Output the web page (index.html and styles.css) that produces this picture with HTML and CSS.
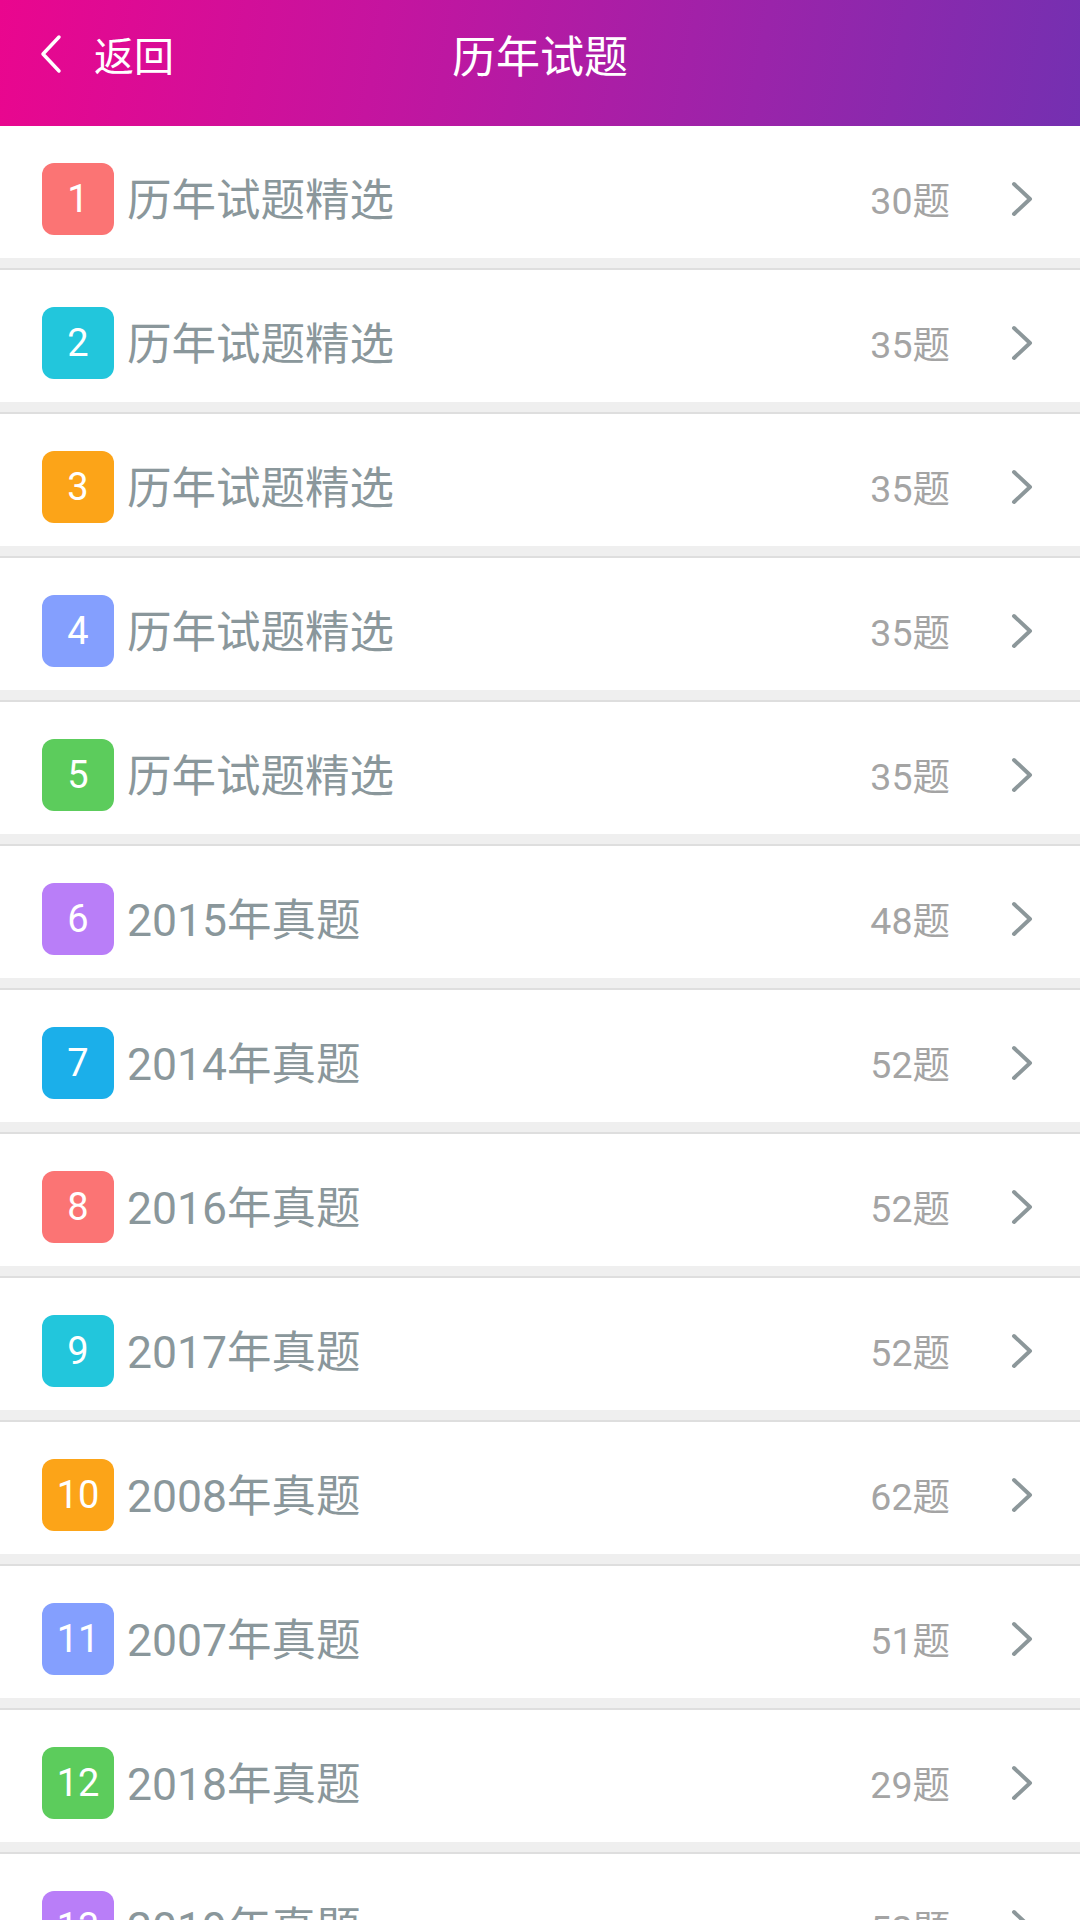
FILE: index.html
```html
<!DOCTYPE html>
<html lang="zh-CN">
<head>
<meta charset="UTF-8" />
<meta name="viewport" content="width=device-width, initial-scale=1" />
<title>历年试题</title>
<link rel="stylesheet" href="styles.css">
</head>
<body>

<header class="header">
  <div class="bar">
    <a class="back" href="#">
      <svg width="24" height="40" viewBox="0 0 24 40"><path d="M20 3 L4 20 L20 37" fill="none" stroke="#fff" stroke-width="3.5" stroke-linecap="round" stroke-linejoin="round"/></svg>
      <span>返回</span>
    </a>
    <h1 class="title">历年试题</h1>
    <div></div>
  </div>
</header>

<ul class="list">
  <li class="item"><span class="num c1">1</span><span class="name">历年试题精选</span><span class="count">30题</span><svg class="arrow" width="24" height="36" viewBox="0 0 24 36"><path d="M4 3 L20 18 L4 33" fill="none" stroke-width="4" stroke-linecap="round" stroke-linejoin="round"/></svg></li>
  <li class="item"><span class="num c2">2</span><span class="name">历年试题精选</span><span class="count">35题</span><svg class="arrow" width="24" height="36" viewBox="0 0 24 36"><path d="M4 3 L20 18 L4 33" fill="none" stroke-width="4" stroke-linecap="round" stroke-linejoin="round"/></svg></li>
  <li class="item"><span class="num c3">3</span><span class="name">历年试题精选</span><span class="count">35题</span><svg class="arrow" width="24" height="36" viewBox="0 0 24 36"><path d="M4 3 L20 18 L4 33" fill="none" stroke-width="4" stroke-linecap="round" stroke-linejoin="round"/></svg></li>
  <li class="item"><span class="num c4">4</span><span class="name">历年试题精选</span><span class="count">35题</span><svg class="arrow" width="24" height="36" viewBox="0 0 24 36"><path d="M4 3 L20 18 L4 33" fill="none" stroke-width="4" stroke-linecap="round" stroke-linejoin="round"/></svg></li>
  <li class="item"><span class="num c5">5</span><span class="name">历年试题精选</span><span class="count">35题</span><svg class="arrow" width="24" height="36" viewBox="0 0 24 36"><path d="M4 3 L20 18 L4 33" fill="none" stroke-width="4" stroke-linecap="round" stroke-linejoin="round"/></svg></li>
  <li class="item"><span class="num c6">6</span><span class="name">2015年真题</span><span class="count">48题</span><svg class="arrow" width="24" height="36" viewBox="0 0 24 36"><path d="M4 3 L20 18 L4 33" fill="none" stroke-width="4" stroke-linecap="round" stroke-linejoin="round"/></svg></li>
  <li class="item"><span class="num c7">7</span><span class="name">2014年真题</span><span class="count">52题</span><svg class="arrow" width="24" height="36" viewBox="0 0 24 36"><path d="M4 3 L20 18 L4 33" fill="none" stroke-width="4" stroke-linecap="round" stroke-linejoin="round"/></svg></li>
  <li class="item"><span class="num c1">8</span><span class="name">2016年真题</span><span class="count">52题</span><svg class="arrow" width="24" height="36" viewBox="0 0 24 36"><path d="M4 3 L20 18 L4 33" fill="none" stroke-width="4" stroke-linecap="round" stroke-linejoin="round"/></svg></li>
  <li class="item"><span class="num c2">9</span><span class="name">2017年真题</span><span class="count">52题</span><svg class="arrow" width="24" height="36" viewBox="0 0 24 36"><path d="M4 3 L20 18 L4 33" fill="none" stroke-width="4" stroke-linecap="round" stroke-linejoin="round"/></svg></li>
  <li class="item"><span class="num c3">10</span><span class="name">2008年真题</span><span class="count">62题</span><svg class="arrow" width="24" height="36" viewBox="0 0 24 36"><path d="M4 3 L20 18 L4 33" fill="none" stroke-width="4" stroke-linecap="round" stroke-linejoin="round"/></svg></li>
  <li class="item"><span class="num c4">11</span><span class="name">2007年真题</span><span class="count">51题</span><svg class="arrow" width="24" height="36" viewBox="0 0 24 36"><path d="M4 3 L20 18 L4 33" fill="none" stroke-width="4" stroke-linecap="round" stroke-linejoin="round"/></svg></li>
  <li class="item"><span class="num c5">12</span><span class="name">2018年真题</span><span class="count">29题</span><svg class="arrow" width="24" height="36" viewBox="0 0 24 36"><path d="M4 3 L20 18 L4 33" fill="none" stroke-width="4" stroke-linecap="round" stroke-linejoin="round"/></svg></li>
  <li class="item"><span class="num c6">13</span><span class="name">2019年真题</span><span class="count">52题</span><svg class="arrow" width="24" height="36" viewBox="0 0 24 36"><path d="M4 3 L20 18 L4 33" fill="none" stroke-width="4" stroke-linecap="round" stroke-linejoin="round"/></svg></li>
</ul>

</body>
</html>
```

FILE: styles.css
```css
html, body {
  margin: 0;
  padding: 0;
}
body {
  background: #fff;
  font-family: Roboto, "Noto Sans CJK SC", sans-serif;
  width: 1080px;
  height: 1920px;
  overflow: hidden;
}
.header {
  height: 126px;
  padding-bottom: 18px;
  box-sizing: border-box;
  background: linear-gradient(100deg, #ea068e 0%, #c5149f 35%, #9a24aa 70%, #7430b1 100%);
  color: #fff;
}
.bar {
  height: 108px;
  display: grid;
  grid-template-columns: 1fr auto 1fr;
  align-items: center;
}
.back {
  display: flex;
  align-items: center;
  color: #fff;
  text-decoration: none;
  padding-left: 39px;
  font-size: 40px;
}
.back span {
  margin-left: 31px;
}
.title {
  margin: 0;
  font-size: 44px;
  font-weight: 400;
}
.list {
  list-style: none;
  margin: 0;
  padding: 0;
}
.item {
  height: 142px;
  padding-top: 14px;
  box-sizing: border-box;
  display: flex;
  align-items: center;
  background: #fff;
  border-bottom: 10px solid #efefef;
  box-shadow: 0 2px 0 #dedede;
  margin-bottom: 2px;
}
.num {
  width: 72px;
  height: 72px;
  border-radius: 12px;
  margin-left: 42px;
  display: flex;
  align-items: center;
  justify-content: center;
  color: #fff;
  font-size: 38px;
}
.name {
  margin-left: 13px;
  padding-bottom: 6px;
  font-size: 44.5px;
  color: #8a979b;
  flex: 1;
}
.count {
  padding-bottom: 4px;
  font-size: 37.5px;
  color: #a4a4a4;
  margin-right: 60px;
}
.arrow {
  margin-right: 46px;
  stroke: #8c979a;
}
.c1 { background: #fb7474; }
.c2 { background: #22c6dc; }
.c3 { background: #fca418; }
.c4 { background: #849ffe; }
.c5 { background: #5ccc5c; }
.c6 { background: #b97ef8; }
.c7 { background: #1bafea; }
```
